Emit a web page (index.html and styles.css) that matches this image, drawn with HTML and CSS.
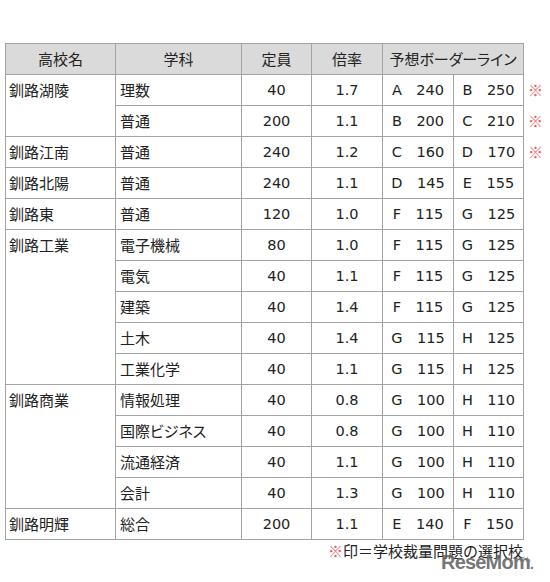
FILE: index.html
```html
<!DOCTYPE html>
<html lang="ja">
<head>
<meta charset="utf-8">
<link rel="stylesheet" href="styles.css">
</head>
<body>
<div class="page">
  <table class="t">
    <colgroup>
      <col class="c1"><col class="c2"><col class="c3"><col class="c4"><col class="c5"><col class="c6"><col class="c7">
    </colgroup>
    <thead>
      <tr><th>高校名</th><th>学科</th><th>定員</th><th>倍率</th><th colspan="2">予想ボーダーライン</th><th class="x"></th></tr>
    </thead>
    <tbody>
      <tr><td class="s" rowspan="2">釧路湖陵</td><td class="l">理数</td><td>40</td><td>1.7</td><td>A　240</td><td>B　250</td><td class="x">※</td></tr>
      <tr><td class="l">普通</td><td>200</td><td>1.1</td><td>B　200</td><td>C　210</td><td class="x">※</td></tr>
      <tr><td class="s">釧路江南</td><td class="l">普通</td><td>240</td><td>1.2</td><td>C　160</td><td>D　170</td><td class="x">※</td></tr>
      <tr><td class="s">釧路北陽</td><td class="l">普通</td><td>240</td><td>1.1</td><td>D　145</td><td>E　155</td><td class="x"></td></tr>
      <tr><td class="s">釧路東</td><td class="l">普通</td><td>120</td><td>1.0</td><td>F　115</td><td>G　125</td><td class="x"></td></tr>
      <tr><td class="s" rowspan="5">釧路工業</td><td class="l">電子機械</td><td>80</td><td>1.0</td><td>F　115</td><td>G　125</td><td class="x"></td></tr>
      <tr><td class="l">電気</td><td>40</td><td>1.1</td><td>F　115</td><td>G　125</td><td class="x"></td></tr>
      <tr><td class="l">建築</td><td>40</td><td>1.4</td><td>F　115</td><td>G　125</td><td class="x"></td></tr>
      <tr><td class="l">土木</td><td>40</td><td>1.4</td><td>G　115</td><td>H　125</td><td class="x"></td></tr>
      <tr><td class="l">工業化学</td><td>40</td><td>1.1</td><td>G　115</td><td>H　125</td><td class="x"></td></tr>
      <tr><td class="s" rowspan="4">釧路商業</td><td class="l">情報処理</td><td>40</td><td>0.8</td><td>G　100</td><td>H　110</td><td class="x"></td></tr>
      <tr><td class="l">国際ビジネス</td><td>40</td><td>0.8</td><td>G　100</td><td>H　110</td><td class="x"></td></tr>
      <tr><td class="l">流通経済</td><td>40</td><td>1.1</td><td>G　100</td><td>H　110</td><td class="x"></td></tr>
      <tr><td class="l">会計</td><td>40</td><td>1.3</td><td>G　100</td><td>H　110</td><td class="x"></td></tr>
      <tr><td class="s">釧路明輝</td><td class="l">総合</td><td>200</td><td>1.1</td><td>E　140</td><td>F　150</td><td class="x"></td></tr>
    </tbody>
  </table>
  <div class="note"><span class="red">※</span>印＝学校裁量問題の選択校</div>
  <div class="logo"><span class="kana">リセマム</span>ReseMom<span class="dot">.</span></div>
</div>
</body>
</html>
```
FILE: styles.css
```css
html, body {
  margin: 0;
  padding: 0;
  background: #fff;
}
.page {
  position: relative;
  width: 550px;
  height: 582px;
  padding: 43px 0 0 5px;
  box-sizing: border-box;
  font-family: "DejaVu Sans", "Noto Sans CJK JP", sans-serif;
  font-size: 14.5px;
  color: #222;
}
.t {
  border-collapse: collapse;
  table-layout: fixed;
  width: 538px;
}
.c1 { width: 110px; }
.c2 { width: 126px; }
.c3 { width: 70px; }
.c4 { width: 71px; }
.c5 { width: 71px; }
.c6 { width: 70px; }
.c7 { width: 20px; }
.t th, .t td {
  border: 1px solid #a3a3a3;
  height: 30px;
  padding: 0;
  line-height: 30px;
  text-align: center;
  font-weight: normal;
  white-space: nowrap;
}
.t th {
  background: #dadada;
  font-family: "Noto Sans CJK JP", sans-serif;
  font-size: 15px;
}
.t th.kana-h,
.t th {
  font-feature-settings: "palt";
}
.t td {
  font-family: "DejaVu Sans", "Noto Sans CJK JP", sans-serif;
  font-size: 14.5px;
}
.t td.l, .t td.s {
  text-align: left;
  padding-left: 3px;
  font-family: "Noto Sans CJK JP", sans-serif;
  font-size: 15px;
  font-feature-settings: "palt";
}
.t td.l { padding-left: 4px; }
.t td.s { vertical-align: top; }
.t th.x, .t td.x {
  border: none;
  background: none;
  color: #e85a5e;
  text-align: left;
  padding-left: 4px;
  font-family: "Noto Sans CJK JP", sans-serif;
  font-size: 15px;
}
.note {
  width: 518px;
  text-align: right;
  margin-top: 1px;
  line-height: 20px;
  font-family: "Noto Sans CJK JP", sans-serif;
  font-size: 15px;
}
.red { color: #e85a5e; }
.logo {
  position: absolute;
  left: 441px;
  top: 551px;
  font-family: "Liberation Sans", sans-serif;
  font-weight: bold;
  font-size: 20px;
  letter-spacing: -0.8px;
  color: rgba(100, 100, 100, 0.9);
  line-height: 22px;
}
.logo .dot { font-size: 14px; }
.logo .kana {
  position: absolute;
  right: 2px;
  top: -3px;
  font-size: 6px;
  font-weight: normal;
  letter-spacing: 0;
  font-family: "Noto Sans CJK JP", sans-serif;
  color: rgba(110, 110, 110, 0.8);
}
```
